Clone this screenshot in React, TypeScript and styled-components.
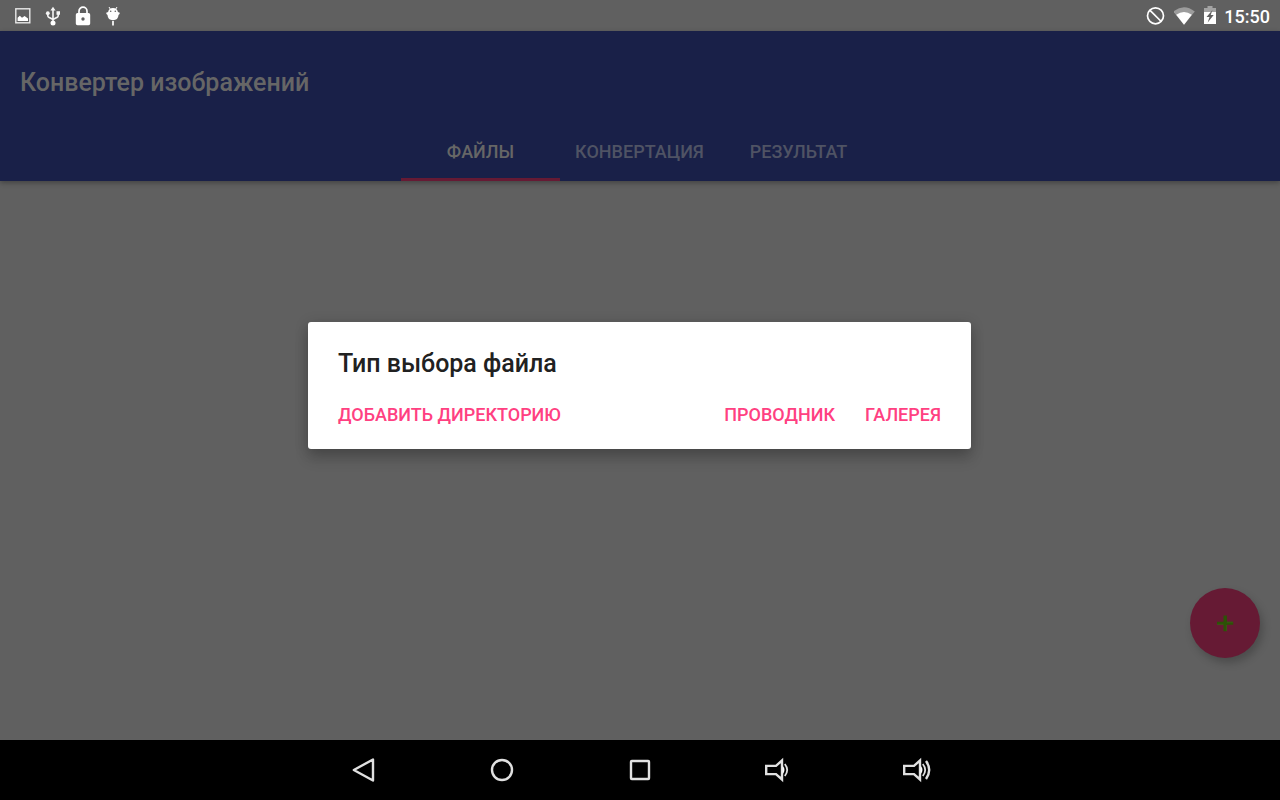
import React from "react";
import styled, { createGlobalStyle } from "styled-components";

const GlobalStyle = createGlobalStyle`
  * { box-sizing: border-box; }
  body { margin: 0; background: #606060; font-family: Roboto, "Noto Sans", sans-serif; }
  button { border: 0; padding: 0; background: none; font: inherit; cursor: pointer; }
`;

const Screen = styled.div`
  min-height: 100vh;
  display: flex;
  flex-direction: column;
`;

const StatusBar = styled.div`
  height: 31px;
  flex: none;
  display: flex;
  align-items: center;
  justify-content: space-between;
  padding: 0 10px 0 8px;
  background: #606060;
`;

const Notifications = styled.div`
  display: flex;
  align-items: center;
`;

const Notification = styled.span`
  width: 30px;
  display: grid;
  place-items: center;
`;

const SystemStatus = styled.div`
  display: flex;
  align-items: center;
  gap: 8px;
`;

const Clock = styled.time`
  color: #ffffff;
  font-size: 18px;
  line-height: 24px;
  font-weight: 500;
  padding-top: 2px;
`;

const Window = styled.div`
  flex: 1;
  display: flex;
  flex-direction: column;
  position: relative;
`;

const AppBar = styled.header`
  background: #192048;
  box-shadow: 0 2px 5px rgba(0, 0, 0, 0.3);
`;

const AppTitle = styled.h1`
  margin: 0;
  padding: 37px 20px 29px;
  color: #666666;
  font-size: 25px;
  line-height: 30px;
  font-weight: 500;
`;

const Tabs = styled.nav`
  display: flex;
  justify-content: center;
  padding-right: 1px;
`;

const Tab = styled.button<{ $active?: boolean }>`
  && {
    width: 159px;
    height: 54px;
    padding-bottom: 2px;
    border-bottom: 3px solid ${(p) => (p.$active ? "#661a34" : "transparent")};
    color: ${(p) => (p.$active ? "#666666" : "#4f5364")};
    font-size: 18px;
    line-height: 24px;
    font-weight: 500;
  }
`;

const Content = styled.main`
  flex: 1;
  display: flex;
  justify-content: flex-end;
  align-items: flex-end;
  padding: 20px 20px 82px;
`;

const AddButton = styled.button`
  && {
    width: 70px;
    height: 70px;
    display: grid;
    place-items: center;
    border-radius: 50%;
    background: #661a34;
    box-shadow: 3px 5px 8px rgba(0, 0, 0, 0.22);
  }
`;

const DialogLayer = styled.div`
  position: absolute;
  inset: 0;
  display: flex;
  align-items: center;
  justify-content: center;
  padding-right: 1px;
`;

const Dialog = styled.section`
  width: 663px;
  max-width: 100%;
  padding: 26px 30px 22px;
  border-radius: 3px;
  background: #ffffff;
  box-shadow: 0 10px 14px rgba(0, 0, 0, 0.16), 0 2px 14px rgba(0, 0, 0, 0.18);
`;

const DialogTitle = styled.h2`
  margin: 0 0 24px;
  color: #212121;
  font-size: 25px;
  line-height: 31px;
  font-weight: 500;
`;

const DialogActions = styled.div`
  display: flex;
  gap: 30px;
`;

const Action = styled.button<{ $start?: boolean }>`
  && {
    margin-right: ${(p) => (p.$start ? "auto" : "0")};
    color: #ff4081;
    font-size: 18px;
    line-height: 24px;
    font-weight: 500;
  }
`;

const NavBar = styled.nav`
  height: 60px;
  flex: none;
  display: flex;
  justify-content: center;
  background: #000000;
`;

const NavButton = styled.button`
  width: 138px;
  display: grid;
  place-items: center;
`;

const navStroke = { fill: "none", stroke: "#e0e0e0", strokeWidth: 2.4 } as const;

const PictureIcon = () => (
  <svg width="18" height="18" viewBox="0 0 18 18" aria-hidden="true">
    <rect x="1.800" y="1.800" width="14" height="14" fill="none" stroke="#e8e8e8" strokeWidth="1.400" />
    <path d="M3.600 14v-3.300l2.200-2 2.200 2 2.600-1.600 3.400 2.400V14z" fill="#fff" />
  </svg>
);

const UsbIcon = () => (
  <svg width="16" height="20" viewBox="0 0 16 20" aria-hidden="true">
    <path d="M8 3v13M2.800 7v2.500q0 1.200 1 1.800L8 13.500M13.200 7v2.500q0 1.200-1 1.800L8 13.500" fill="none" stroke="#f5f5f5" strokeWidth="1.600" />
    <path d="M8 .8l2.600 3.700H5.400zM11.500 5.300h3.500v3.500h-3.500z" fill="#f5f5f5" />
    <circle cx="2.800" cy="7.200" r="1.900" fill="#f5f5f5" />
    <circle cx="8" cy="17" r="2.500" fill="#fff" />
  </svg>
);

const LockIcon = () => (
  <svg width="16" height="20" viewBox="0 0 16 20" aria-hidden="true">
    <path d="M4 8V5.200a4 4 0 0 1 8 0V8" fill="none" stroke="#fff" strokeWidth="1.700" />
    <path fillRule="evenodd" d="M2.500 7h11q1.700 0 1.700 1.700v8.800q0 1.700-1.700 1.700h-11q-1.700 0-1.700-1.700V8.700Q.8 7 2.500 7zM8 11.300a1.700 1.700 0 1 0 0 3.400 1.700 1.700 0 0 0 0-3.400z" fill="#fff" />
  </svg>
);

const RobotIcon = () => (
  <svg width="16" height="20" viewBox="0 0 16 20" aria-hidden="true">
    <path d="M4 1l1.500 2.500M12 1l-1.500 2.500" stroke="#fff" strokeWidth="1" />
    <path d="M3 6.200Q4 2 8 2t5 4.200h1.200q1 .8.300 1.900l-1 .9q-.3 5.200-5.500 5.200T2.500 9l-1-.9Q.8 7 1.800 6.200z" fill="#fff" />
    <path d="M8 15v4.500" stroke="#e8e8e8" strokeWidth="2" />
    <circle cx="5.700" cy="5.200" r=".8" fill="#606060" />
    <circle cx="10.300" cy="5.200" r=".8" fill="#606060" />
  </svg>
);

const BlockedIcon = () => (
  <svg width="20" height="20" viewBox="0 0 20 20" aria-hidden="true">
    <circle cx="9.500" cy="9.800" r="8" fill="none" stroke="#fff" strokeWidth="1.700" />
    <path d="M3.800 4.100l11.400 11.400" stroke="#fff" strokeWidth="1.700" />
  </svg>
);

const WifiIcon = () => (
  <svg width="22" height="18" viewBox="0 0 22 18" aria-hidden="true">
    <path d="M-.8 4.500q10.800-8.500 21.600 0L10 17.800z" fill="#9c9c9c" />
    <path d="M2.200 7.800q7.800-5.600 15.600 0L10 17.800z" fill="#fff" />
  </svg>
);

const BatteryIcon = () => (
  <svg width="12" height="20" viewBox="0 0 12 20" aria-hidden="true">
    <path d="M0 2h3.500V0h5v2H12v5H0z" fill="#a3a3a3" />
    <path d="M0 6h12v12H0z" fill="#fff" />
    <path d="M8.500 4L2.500 11h3l-1.800 5.500 6-7.500h-3z" fill="#606060" />
  </svg>
);

const PlusIcon = () => (
  <svg width="18" height="18" viewBox="0 0 18 18" aria-hidden="true">
    <path d="M7.500 1.500h3.400v6.300h6.300v3h-6.300v6.400H7.500v-6.400H1v-3h6.500z" fill="#2c5206" />
    <path d="M1 10.300h6.500M11 8.200h6M10.400 11v6" stroke="#3f5a18" strokeWidth=".8" />
  </svg>
);

const BackIcon = () => (
  <svg width="26" height="26" viewBox="0 0 26 26" aria-hidden="true">
    <path d="M2.800 13L22 2.500v21z" {...navStroke} strokeLinejoin="round" />
  </svg>
);

const HomeIcon = () => (
  <svg width="26" height="26" viewBox="0 0 26 26" aria-hidden="true">
    <circle cx="13" cy="13" r="10" {...navStroke} />
  </svg>
);

const RecentIcon = () => (
  <svg width="26" height="26" viewBox="0 0 26 26" aria-hidden="true">
    <rect x="4" y="4" width="18" height="18" rx=".8" {...navStroke} />
  </svg>
);

const VolumeIcon = ({ loud }: { loud?: boolean }) => (
  <svg width="30" height="26" viewBox="0 0 30 26" aria-hidden="true">
    <path d="M3.200 8.900h9.800l6-5.400v19l-6-5.400H3.200z" {...navStroke} />
    <path d="M19.500 8.500q4 4.500 0 9z" fill="#fff" />
    <path d="M21.800 7q4.800 6 0 12" {...navStroke} strokeWidth="1.800" />
    {loud && <path d="M25 4q6.400 9 0 18" {...navStroke} />}
  </svg>
);

export default function App() {
  return (
    <Screen>
      <GlobalStyle />
      <StatusBar>
        <Notifications>
          <Notification><PictureIcon /></Notification>
          <Notification><UsbIcon /></Notification>
          <Notification><LockIcon /></Notification>
          <Notification><RobotIcon /></Notification>
        </Notifications>
        <SystemStatus>
          <BlockedIcon />
          <WifiIcon />
          <BatteryIcon />
          <Clock>15:50</Clock>
        </SystemStatus>
      </StatusBar>
      <Window>
        <AppBar>
          <AppTitle>Конвертер изображений</AppTitle>
          <Tabs>
            <Tab type="button" $active>ФАЙЛЫ</Tab>
            <Tab type="button">КОНВЕРТАЦИЯ</Tab>
            <Tab type="button">РЕЗУЛЬТАТ</Tab>
          </Tabs>
        </AppBar>
        <Content>
          <AddButton type="button" aria-label="Добавить">
            <PlusIcon />
          </AddButton>
        </Content>
        <DialogLayer>
          <Dialog role="dialog" aria-modal="true" aria-labelledby="dialog-title">
            <DialogTitle id="dialog-title">Тип выбора файла</DialogTitle>
            <DialogActions>
              <Action type="button" $start>ДОБАВИТЬ ДИРЕКТОРИЮ</Action>
              <Action type="button">ПРОВОДНИК</Action>
              <Action type="button">ГАЛЕРЕЯ</Action>
            </DialogActions>
          </Dialog>
        </DialogLayer>
      </Window>
      <NavBar>
        <NavButton type="button" aria-label="Назад"><BackIcon /></NavButton>
        <NavButton type="button" aria-label="Домой"><HomeIcon /></NavButton>
        <NavButton type="button" aria-label="Недавние"><RecentIcon /></NavButton>
        <NavButton type="button" aria-label="Тише"><VolumeIcon /></NavButton>
        <NavButton type="button" aria-label="Громче"><VolumeIcon loud /></NavButton>
      </NavBar>
    </Screen>
  );
}
